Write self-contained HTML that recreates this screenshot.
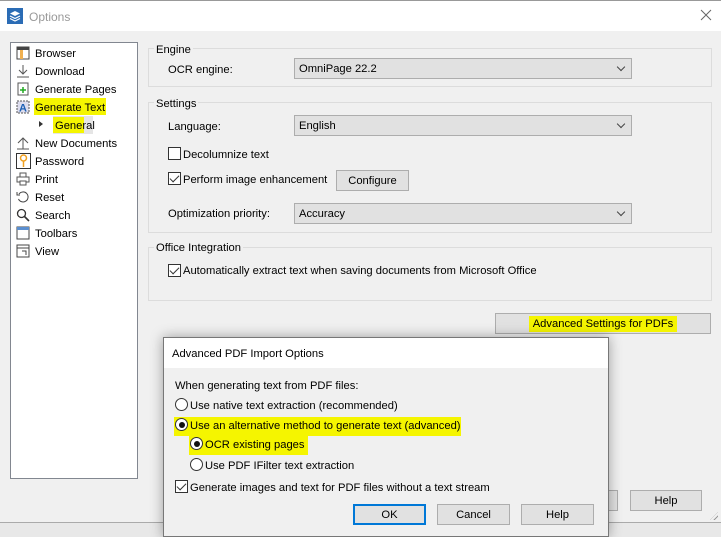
<!DOCTYPE html>
<html><head><meta charset="utf-8"><style>
*{box-sizing:border-box;margin:0;padding:0}
body{width:721px;height:530px;background:#e8e8e8;font-family:"Liberation Sans",sans-serif;font-size:11.2px;color:#000;position:relative;overflow:hidden}
.a{position:absolute}
.t{position:absolute;white-space:nowrap;line-height:14px;padding-top:1px}
.gb{position:absolute;border:1px solid #dcdcdc}
.gl{position:absolute;background:#f0f0f0;padding:1px 2px 0;line-height:14px}
.sel{position:absolute;background:#e1e1e1;border:1px solid #adadad;height:21px;padding-left:4px;line-height:21px}
.sel:after{content:"";position:absolute;right:7px;top:5px;width:5px;height:5px;border-right:1px solid #444;border-bottom:1px solid #444;transform:rotate(45deg)}
.btn{position:absolute;background:#e1e1e1;border:1px solid #adadad;text-align:center;line-height:20px;height:21px}
.cb{position:absolute;width:13px;height:13px;border:1px solid #333;background:#fff}
.ck:after{content:"";position:absolute;left:3px;top:0px;width:4px;height:8px;border-right:1.3px solid #333;border-bottom:1.3px solid #333;transform:rotate(45deg)}
.rb{position:absolute;width:13px;height:13px;border:1px solid #333;border-radius:50%;background:#fff}
.rb.on:after{content:"";position:absolute;left:2.5px;top:2.5px;width:6px;height:6px;border-radius:50%;background:#111}
.hl{position:absolute;background:#f5f500}
.ic{position:absolute;left:16px;width:14px;height:14px}
</style></head><body>
<div class="a" style="left:0;top:0;width:721px;height:523px;background:#f0f0f0;border-top:1px solid #999;border-bottom:1px solid #aaa"></div>
<div class="a" style="left:0;top:1px;width:721px;height:30px;background:#fff"></div>
<div class="a" style="left:7px;top:8px;width:16px;height:16px;background:#2b6cb5"></div>
<svg class="a" style="left:9px;top:10px" width="12" height="12" viewBox="0 0 12 12"><path d="M6 1L11 3.5 6 6 1 3.5Z" fill="#fff"/><path d="M1 6L6 8.5 11 6M1 8.5L6 11 11 8.5" stroke="#fff" fill="none" stroke-width="1.2"/></svg>
<div class="t" style="left:29px;top:9px;color:#999;font-size:12px">Options</div>
<svg class="a" style="left:700px;top:9px" width="12" height="12"><path d="M1 1L11 11M11 1L1 11" stroke="#666" stroke-width="1"/></svg>

<div class="a" style="left:10px;top:42px;width:128px;height:437px;background:#fff;border:1px solid #828790"></div>
<div class="hl" style="left:34px;top:98px;width:72px;height:17px"></div>
<div class="a" style="left:53px;top:116px;width:40px;height:18px;background:#e5e5e5"></div>
<div class="hl" style="left:53px;top:117px;width:31px;height:16px"></div>
<svg class="ic" style="top:46px"><rect x="1" y="1" width="12" height="12" fill="#fff" stroke="#444"/><rect x="1" y="1" width="12" height="3" fill="#444"/><rect x="4" y="4" width="3" height="9" fill="#f0b050"/></svg>
<svg class="ic" style="top:64px"><path d="M7 1V10M3 6L7 10 11 6M1 13H13" stroke="#555" fill="none"/></svg>
<svg class="ic" style="top:82px"><rect x="2" y="1" width="10" height="12" fill="#fff" stroke="#555"/><path d="M7 5V11M4 8H10" stroke="#2a2" stroke-width="1.5"/></svg>
<svg class="ic" style="top:100px"><rect x="1" y="1" width="12" height="12" fill="#dde" stroke="#555" stroke-dasharray="2 1"/><text x="3" y="11.5" font-size="11" font-weight="bold" fill="#1a5fb4" font-family="Liberation Sans">A</text></svg>
<div class="a" style="left:39px;top:121px;border-left:4px solid #333;border-top:3.5px solid transparent;border-bottom:3.5px solid transparent"></div>
<svg class="ic" style="top:136px"><path d="M7 13V2M2 7L7 2 12 7M1 13H13" stroke="#555" fill="none"/></svg>
<svg class="ic" style="top:153px;width:15px;height:16px"><rect x="0.5" y="0.5" width="14" height="15" fill="#fff" stroke="#333"/><circle cx="7.5" cy="5" r="3" fill="none" stroke="#f0a020" stroke-width="1.5"/><path d="M7.5 8V14" stroke="#f0a020" stroke-width="1.5"/></svg>
<svg class="ic" style="top:172px"><rect x="4" y="1" width="6" height="4" fill="none" stroke="#555"/><rect x="1" y="5" width="12" height="5" fill="none" stroke="#555"/><rect x="4" y="9" width="6" height="4" fill="#fff" stroke="#555"/></svg>
<svg class="ic" style="top:190px"><path d="M3 4A5 5 0 1 1 2.5 9" stroke="#444" fill="none"/><path d="M1 2V5H4" stroke="#444" fill="none"/></svg>
<svg class="ic" style="top:208px"><circle cx="5.5" cy="5.5" r="4" stroke="#333" fill="none" stroke-width="1.3"/><path d="M8.5 8.5L13 13" stroke="#333" stroke-width="1.6"/></svg>
<svg class="ic" style="top:226px"><rect x="1" y="1" width="12" height="12" fill="#fff" stroke="#444"/><rect x="1" y="1" width="12" height="3" fill="#5b8fd0"/></svg>
<svg class="ic" style="top:244px"><rect x="1" y="1" width="12" height="12" fill="#fff" stroke="#444"/><path d="M1 4H13M6 7H10V11" stroke="#444" fill="none"/></svg>
<div class="t" style="left:35px;top:46px">Browser</div>
<div class="t" style="left:35px;top:64px">Download</div>
<div class="t" style="left:35px;top:82px">Generate Pages</div>
<div class="t" style="left:35px;top:100px">Generate Text</div>
<div class="t" style="left:55px;top:118px">General</div>
<div class="t" style="left:35px;top:136px">New Documents</div>
<div class="t" style="left:35px;top:154px">Password</div>
<div class="t" style="left:35px;top:172px">Print</div>
<div class="t" style="left:35px;top:190px">Reset</div>
<div class="t" style="left:35px;top:208px">Search</div>
<div class="t" style="left:35px;top:226px">Toolbars</div>
<div class="t" style="left:35px;top:244px">View</div>

<div class="gb" style="left:148px;top:48px;width:564px;height:39px"></div>
<div class="gl" style="left:154px;top:42px">Engine</div>
<div class="t" style="left:168px;top:62px">OCR engine:</div>
<div class="sel" style="left:294px;top:58px;width:338px">OmniPage 22.2</div>
<div class="gb" style="left:148px;top:102px;width:564px;height:131px"></div>
<div class="gl" style="left:154px;top:96px">Settings</div>
<div class="t" style="left:168px;top:119px">Language:</div>
<div class="sel" style="left:294px;top:115px;width:338px">English</div>
<div class="cb" style="left:168px;top:147px"></div>
<div class="t" style="left:183px;top:147px">Decolumnize text</div>
<div class="cb ck" style="left:168px;top:172px"></div>
<div class="t" style="left:183px;top:172px">Perform image enhancement</div>
<div class="btn" style="left:336px;top:170px;width:73px">Configure</div>
<div class="t" style="left:168px;top:206px">Optimization priority:</div>
<div class="sel" style="left:294px;top:203px;width:338px">Accuracy</div>
<div class="gb" style="left:148px;top:247px;width:564px;height:54px"></div>
<div class="gl" style="left:154px;top:240px">Office Integration</div>
<div class="cb ck" style="left:168px;top:264px"></div>
<div class="t" style="left:183px;top:263px">Automatically extract text when saving documents from Microsoft Office</div>
<div class="btn" style="left:495px;top:313px;width:216px"><span style="background:#f5f500;padding:2px 4px">Advanced Settings for PDFs</span></div>
<div class="btn" style="left:600px;top:490px;width:18px"></div>
<div class="btn" style="left:630px;top:490px;width:72px">Help</div>
<div class="a" style="left:710px;top:512px;width:8px;height:8px;background:repeating-linear-gradient(135deg,transparent 0 2px,#999 2px 3px);clip-path:polygon(100% 0,100% 100%,0 100%)"></div>

<div class="a" style="left:163px;top:337px;width:446px;height:200px;background:#f0f0f0;border:1px solid #777;box-shadow:0 0 12px rgba(0,0,0,.35)"></div>
<div class="a" style="left:164px;top:338px;width:444px;height:30px;background:#fff"></div>
<div class="t" style="left:172px;top:346px">Advanced PDF Import Options</div>
<div class="t" style="left:175px;top:378px">When generating text from PDF files:</div>
<div class="rb" style="left:175px;top:398px"></div>
<div class="t" style="left:190px;top:398px">Use native text extraction (recommended)</div>
<div class="hl" style="left:174px;top:417px;width:287px;height:19px"></div>
<div class="rb on" style="left:175px;top:418px"></div>
<div class="t" style="left:190px;top:418px">Use an alternative method to generate text (advanced)</div>
<div class="hl" style="left:189px;top:436px;width:119px;height:19px"></div>
<div class="rb on" style="left:190px;top:437px"></div>
<div class="t" style="left:205px;top:437px">OCR existing pages</div>
<div class="rb" style="left:190px;top:458px"></div>
<div class="t" style="left:205px;top:458px">Use PDF IFilter text extraction</div>
<div class="cb ck" style="left:175px;top:480px"></div>
<div class="t" style="left:190px;top:480px">Generate images and text for PDF files without a text stream</div>
<div class="btn" style="left:353px;top:504px;width:73px;border:2px solid #0078d7;line-height:18px">OK</div>
<div class="btn" style="left:437px;top:504px;width:73px">Cancel</div>
<div class="btn" style="left:521px;top:504px;width:73px">Help</div>
</body></html>
